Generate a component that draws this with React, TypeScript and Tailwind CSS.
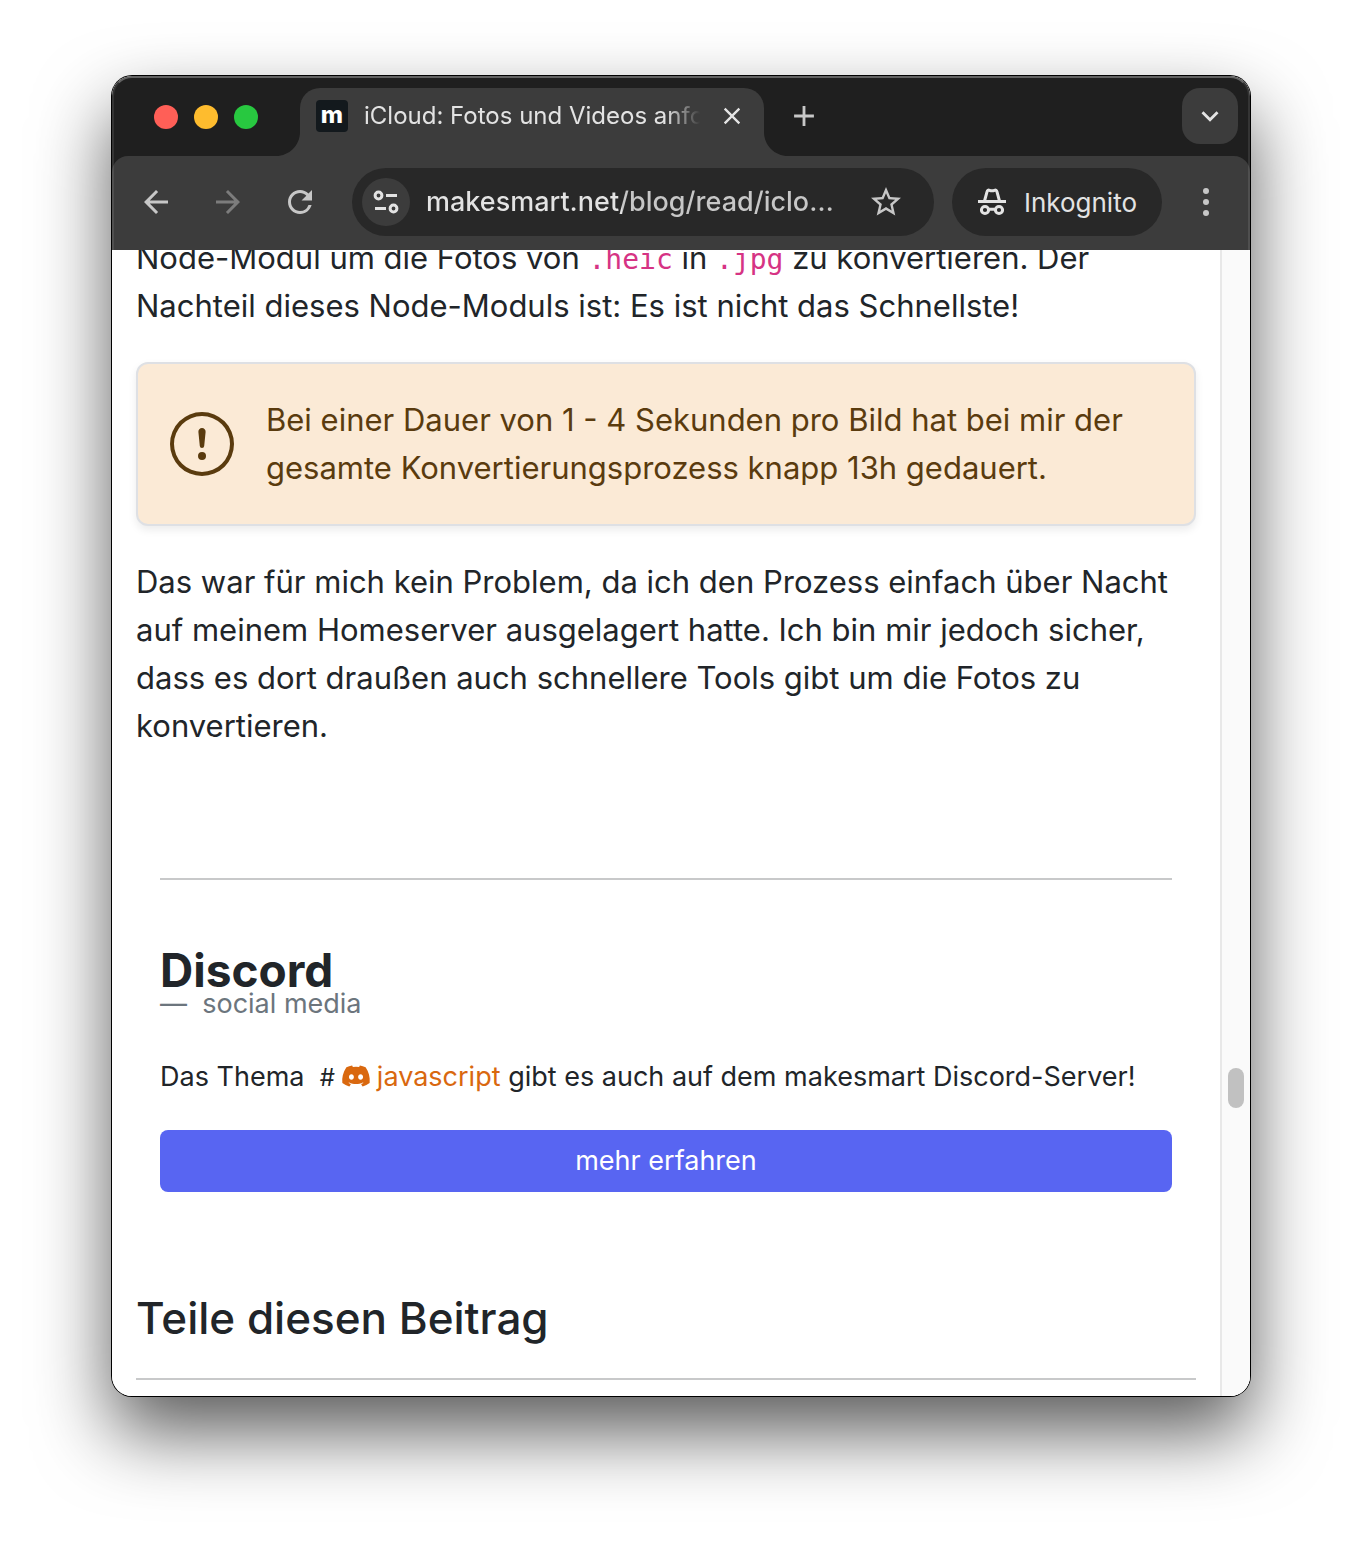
import { useState } from "react";
import { BsExclamationCircle } from "react-icons/bs";
import { FaDiscord } from "react-icons/fa";
import {
  MdAdd,
  MdArrowBack,
  MdArrowForward,
  MdClose,
  MdKeyboardArrowDown,
  MdRefresh,
  MdStarBorder,
} from "react-icons/md";

const LIGHTS = [
  { label: "Schließen", color: "bg-[#ff5f57]" },
  { label: "Minimieren", color: "bg-[#febc2e]" },
  { label: "Maximieren", color: "bg-[#28c840]" },
];

/** Sliders glyph in front of the address. */
function SiteInfoIcon() {
  return (
    <svg width="28" height="28" viewBox="0 0 28 28" fill="none" stroke="currentColor" strokeWidth="3">
      <circle cx="6.5" cy="7.5" r="3.4" />
      <path d="M14 7.5h11M3 20.5h11" />
      <circle cx="21.5" cy="20.5" r="3.4" />
    </svg>
  );
}

/** Hat and glasses. */
function IncognitoIcon() {
  return (
    <svg width="32" height="32" viewBox="0 0 32 32" fill="none" stroke="currentColor" strokeWidth="3">
      <path d="M2 15.5h28" />
      <path d="M8.5 15 11 5.800C11.400 4.200 12.300 3.800 13.500 4.300C15.200 5 16.800 5 18.500 4.300C19.700 3.800 20.600 4.200 21 5.800L23.500 15" />
      <circle cx="9" cy="24" r="3.600" />
      <circle cx="23" cy="24" r="3.600" />
      <path d="M12.500 23.300h7" />
    </svg>
  );
}

/** Concave foot that joins the active tab to the toolbar. */
function TabFoot({ className }: { className: string }) {
  return (
    <svg width="24" height="24" viewBox="0 0 24 24" className={className} aria-hidden="true">
      <path d="M24 0V24H0C13.3 24 24 13.3 24 0Z" fill="#3c3c3c" />
    </svg>
  );
}

function TabStrip() {
  return (
    <div className="flex h-20 items-end pr-3">
      <div className="flex h-20 items-center gap-4 px-[42px] pt-0.5">
        {LIGHTS.map((light) => (
          <button key={light.label} aria-label={light.label} className={`size-6 rounded-full ${light.color}`} />
        ))}
      </div>
      <div className="relative flex h-[68px] w-[464px] items-center rounded-t-[20px] bg-[#3c3c3c] pr-4 pb-3 pl-4 text-[#e3e3e3]">
        <TabFoot className="absolute bottom-0 -left-6" />
        <TabFoot className="absolute -right-6 bottom-0 -scale-x-100" />
        <span className="flex size-8 shrink-0 items-center justify-center rounded bg-[#13191d] pb-0.5 text-2xl leading-none font-extrabold text-white">
          m
        </span>
        <span className="ml-4 min-w-0 flex-1 overflow-hidden text-2xl whitespace-nowrap [mask-image:linear-gradient(to_right,black_90%,transparent)]">
          iCloud: Fotos und Videos anfordern
        </span>
        <button aria-label="Tab schließen" className="ml-4 flex size-8 items-center justify-center">
          <MdClose size={28} className="shrink-0" />
        </button>
      </div>
      <button aria-label="Neuer Tab" className="mb-3 ml-3 flex size-14 items-center justify-center text-[#c7c7c7]">
        <MdAdd size={34} />
      </button>
      <button
        aria-label="Tabs durchsuchen"
        className="mb-3 ml-auto flex size-14 items-center justify-center rounded-[18px] bg-[#3c3c3c] text-[#e3e3e3]"
      >
        <MdKeyboardArrowDown size={34} />
      </button>
    </div>
  );
}

function Toolbar() {
  const [url, setUrl] = useState("makesmart.net/blog/read/icloud-fotos-und-videos-anfordern");

  return (
    <div className="flex items-center rounded-t-2xl bg-[#3c3c3c] px-4 pt-3 pb-3.5 text-[#c7c7c7]">
      <div className="flex gap-4">
        <button aria-label="Zurück" className="flex size-14 items-center justify-center">
          <MdArrowBack size={36} />
        </button>
        <button aria-label="Vorwärts" className="flex size-14 items-center justify-center text-[#7c7c7c]">
          <MdArrowForward size={36} />
        </button>
        <button aria-label="Neu laden" className="flex size-14 items-center justify-center">
          <MdRefresh size={36} />
        </button>
      </div>
      <div className="ml-6 flex h-[68px] min-w-0 flex-1 items-center rounded-full bg-[#282828] px-2.5">
        <button
          aria-label="Website-Informationen"
          className="flex size-12 shrink-0 items-center justify-center rounded-full bg-[#3c3c3c] text-[#e3e3e3]"
        >
          <SiteInfoIcon />
        </button>
        {/* host is brighter than the path */}
        <input
          aria-label="Adresse"
          value={url}
          onChange={(e) => setUrl(e.target.value)}
          className="ml-4 min-w-0 flex-1 overflow-hidden bg-linear-to-r from-[#e3e3e3] from-[196px] to-[#c7c7c7] to-[196px] bg-clip-text text-[27px] font-medium text-ellipsis text-transparent outline-none"
        />
        <button aria-label="Lesezeichen" className="ml-4 flex size-14 shrink-0 items-center justify-center">
          <MdStarBorder size={36} />
        </button>
        <span className="w-2.5" />
      </div>
      <button className="ml-[18px] flex h-[68px] shrink-0 items-center gap-4 rounded-full bg-[#282828] pr-[25px] pl-6 text-[26px] text-[#e3e3e3]">
        <IncognitoIcon />
        Inkognito
      </button>
      <button aria-label="Menü" className="ml-4 flex size-14 shrink-0 items-center justify-center">
        <svg width="8" height="28" viewBox="0 0 8 28" fill="currentColor">
          <circle cx="4" cy="3" r="3" />
          <circle cx="4" cy="14" r="3" />
          <circle cx="4" cy="25" r="3" />
        </svg>
      </button>
    </div>
  );
}

function Code({ children }: { children: string }) {
  return (
    <code className="font-['DejaVu_Sans_Mono',monospace] text-[28px] leading-none text-[#d63384]">{children}</code>
  );
}

function DiscordCard() {
  return (
    <section className="mt-32 px-6">
      <hr className="border-t-2 border-[#c8c9ca]" />
      <h2 className="mt-[70px] text-[46px] leading-10 font-bold">Discord</h2>
      <p className="text-[27px] leading-7 text-[#6c757d]">—&nbsp; social media</p>
      <p className="mt-[38px] text-[27px] leading-[42px]">
        Das Thema &nbsp;<span className="text-2xl leading-none">#</span>
        <a href="#javascript" className="text-[#d9680f]">
          <FaDiscord className="mx-1.5 inline h-6 w-[30px] align-[-2px]" />
          javascript
        </a>{" "}
        gibt es auch auf dem makesmart Discord-Server!
      </p>
      <a
        href="#discord"
        className="mt-8 block rounded-lg bg-[#5865f2] py-2.5 text-center text-[27px] leading-[42px] text-white"
      >
        mehr erfahren
      </a>
    </section>
  );
}

function Article() {
  return (
    <main className="-mt-4 min-w-0 flex-1 px-6 text-[31px] leading-[48px] text-[#212529]">
      <p>
        Node-Modul um die Fotos von <Code>.heic</Code> in <Code>.jpg</Code> zu konvertieren. Der Nachteil dieses
        Node-Moduls ist: Es ist nicht das Schnellste!
      </p>
      <div
        role="alert"
        className="mt-8 flex items-center gap-8 rounded-xl border-2 border-[#dee0e4] bg-[#fbead6] p-8 text-[#5a3b0e] shadow-[0_4px_8px_rgba(0,0,0,0.08)]"
      >
        <BsExclamationCircle size={64} className="shrink-0" />
        <p>
          Bei einer Dauer von 1 - 4 Sekunden pro Bild hat bei mir der gesamte Konvertierungsprozess knapp 13h
          gedauert.
        </p>
      </div>
      <p className="mt-8">
        Das war für mich kein Problem, da ich den Prozess einfach über Nacht auf meinem Homeserver ausgelagert
        hatte. Ich bin mir jedoch sicher, dass es dort draußen auch schnellere Tools gibt um die Fotos zu
        konvertieren.
      </p>
      <DiscordCard />
      <h2 className="mt-24 text-[44px] leading-[60px] font-medium">Teile diesen Beitrag</h2>
      <hr className="mt-[30px] mb-4 border-t-2 border-[#c8c9ca]" />
    </main>
  );
}

export default function App() {
  return (
    <div className="min-h-screen bg-white px-28 pt-19 pb-37 font-[Inter,sans-serif]">
      <div className="rounded-[20px] shadow-[0_0_0_1px_#000,0_36px_76px_rgba(0,0,0,0.65)]">
        <div className="overflow-hidden rounded-[20px] bg-white">
          <header className="relative bg-[#1f1f1f]">
            <TabStrip />
            <Toolbar />
            <div className="pointer-events-none absolute inset-0 rounded-t-[20px] border-x-2 border-t-2 border-x-white/10 border-t-white/30" />
          </header>
          <div className="flex overflow-hidden">
            <Article />
            <div className="flex w-[30px] shrink-0 flex-col items-center border-l-2 border-[#e8e8e8] bg-[#fafafa]">
              <div className="flex-[74]" />
              <div className="h-10 w-4 rounded-full bg-[#c1c1c1]" />
              <div className="flex-[26]" />
            </div>
          </div>
        </div>
      </div>
    </div>
  );
}
